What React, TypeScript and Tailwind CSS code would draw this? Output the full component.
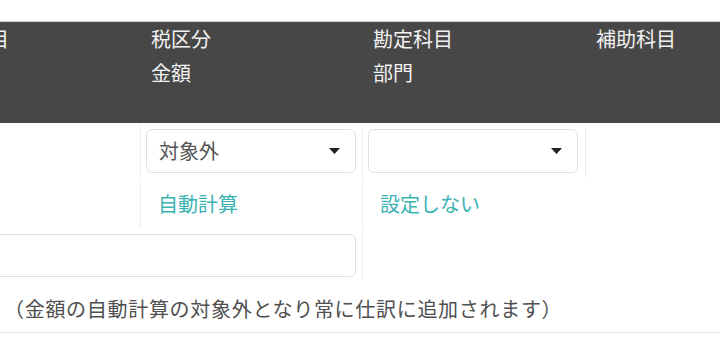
import React from "react";

const font = { fontFamily: '"Noto Sans CJK JP", "Noto Sans", sans-serif' };

function Caret() {
  return (
    <svg width="11" height="6" viewBox="0 0 11 6" className="shrink-0">
      <path d="M0 0 L11 0 L5.5 6 Z" fill="#222" />
    </svg>
  );
}

function Select({ value }: { value?: string }) {
  return (
    <div className="flex h-[44px] w-[210px] items-center justify-between rounded-[6px] border border-[#dcdfe6] bg-white pl-[12px] pr-[15px]">
      <span className="text-[20px] leading-none text-[#555]">{value ?? ""}</span>
      <Caret />
    </div>
  );
}

export default function App() {
  return (
    <div className="h-[360px] w-[720px] overflow-hidden bg-white" style={font}>
      <div className="h-[21px]" />
      <div className="ml-[-82px]">
        {/* header */}
        <div className="grid h-[102px] grid-cols-[222px_222px_223px_222px] border-t border-[#cfcfcf] bg-[#474747] text-[20px] leading-[34px] text-[#f2f2f2]">
          <div className="pl-[11px]">
            <div>明細科目</div>
          </div>
          <div className="pl-[11px]">
            <div>税区分</div>
            <div>金額</div>
          </div>
          <div className="pl-[11px]">
            <div>勘定科目</div>
            <div>部門</div>
          </div>
          <div className="pl-[11px]">
            <div>補助科目</div>
          </div>
        </div>

        {/* row 1 */}
        <div className="mt-[3px] grid h-[51px] grid-cols-[222px_222px_223px_222px]">
          <div />
          <div className="border-l border-[#ececec] pl-[5px] pt-[3px]">
            <Select value="対象外" />
          </div>
          <div className="border-l border-[#ececec] pl-[5px] pt-[3px]">
            <Select />
          </div>
          <div className="border-l border-[#ececec]" />
        </div>

        {/* row 2 */}
        <div className="mt-[3px] grid h-[48px] grid-cols-[222px_222px_445px] text-[20px] text-[#3bb3b3]">
          <div />
          <div className="flex items-center border-l border-[#ececec] pl-[17px]">
            自動計算
          </div>
          <div className="flex items-center border-l border-[#ececec] pl-[17px]">
            設定しない
          </div>
        </div>

        {/* row 3 */}
        <div className="mt-[3px] grid h-[49px] grid-cols-[444px_445px]">
          <div className="pl-[5px] pr-[6px] pt-[3px]">
            <div className="h-[43px] rounded-[6px] border border-[#dcdfe6] bg-white" />
          </div>
          <div className="border-l border-[#ececec]" />
        </div>
      </div>

      {/* note row */}
      <div className="h-[53px] border-b border-[#e6e6e6] pl-[4px] pt-[15px] text-[20px] leading-[28px] tracking-[0.7px] text-[#4f4f4f]">
        （金額の自動計算の対象外となり常に仕訳に追加されます）
      </div>
    </div>
  );
}
